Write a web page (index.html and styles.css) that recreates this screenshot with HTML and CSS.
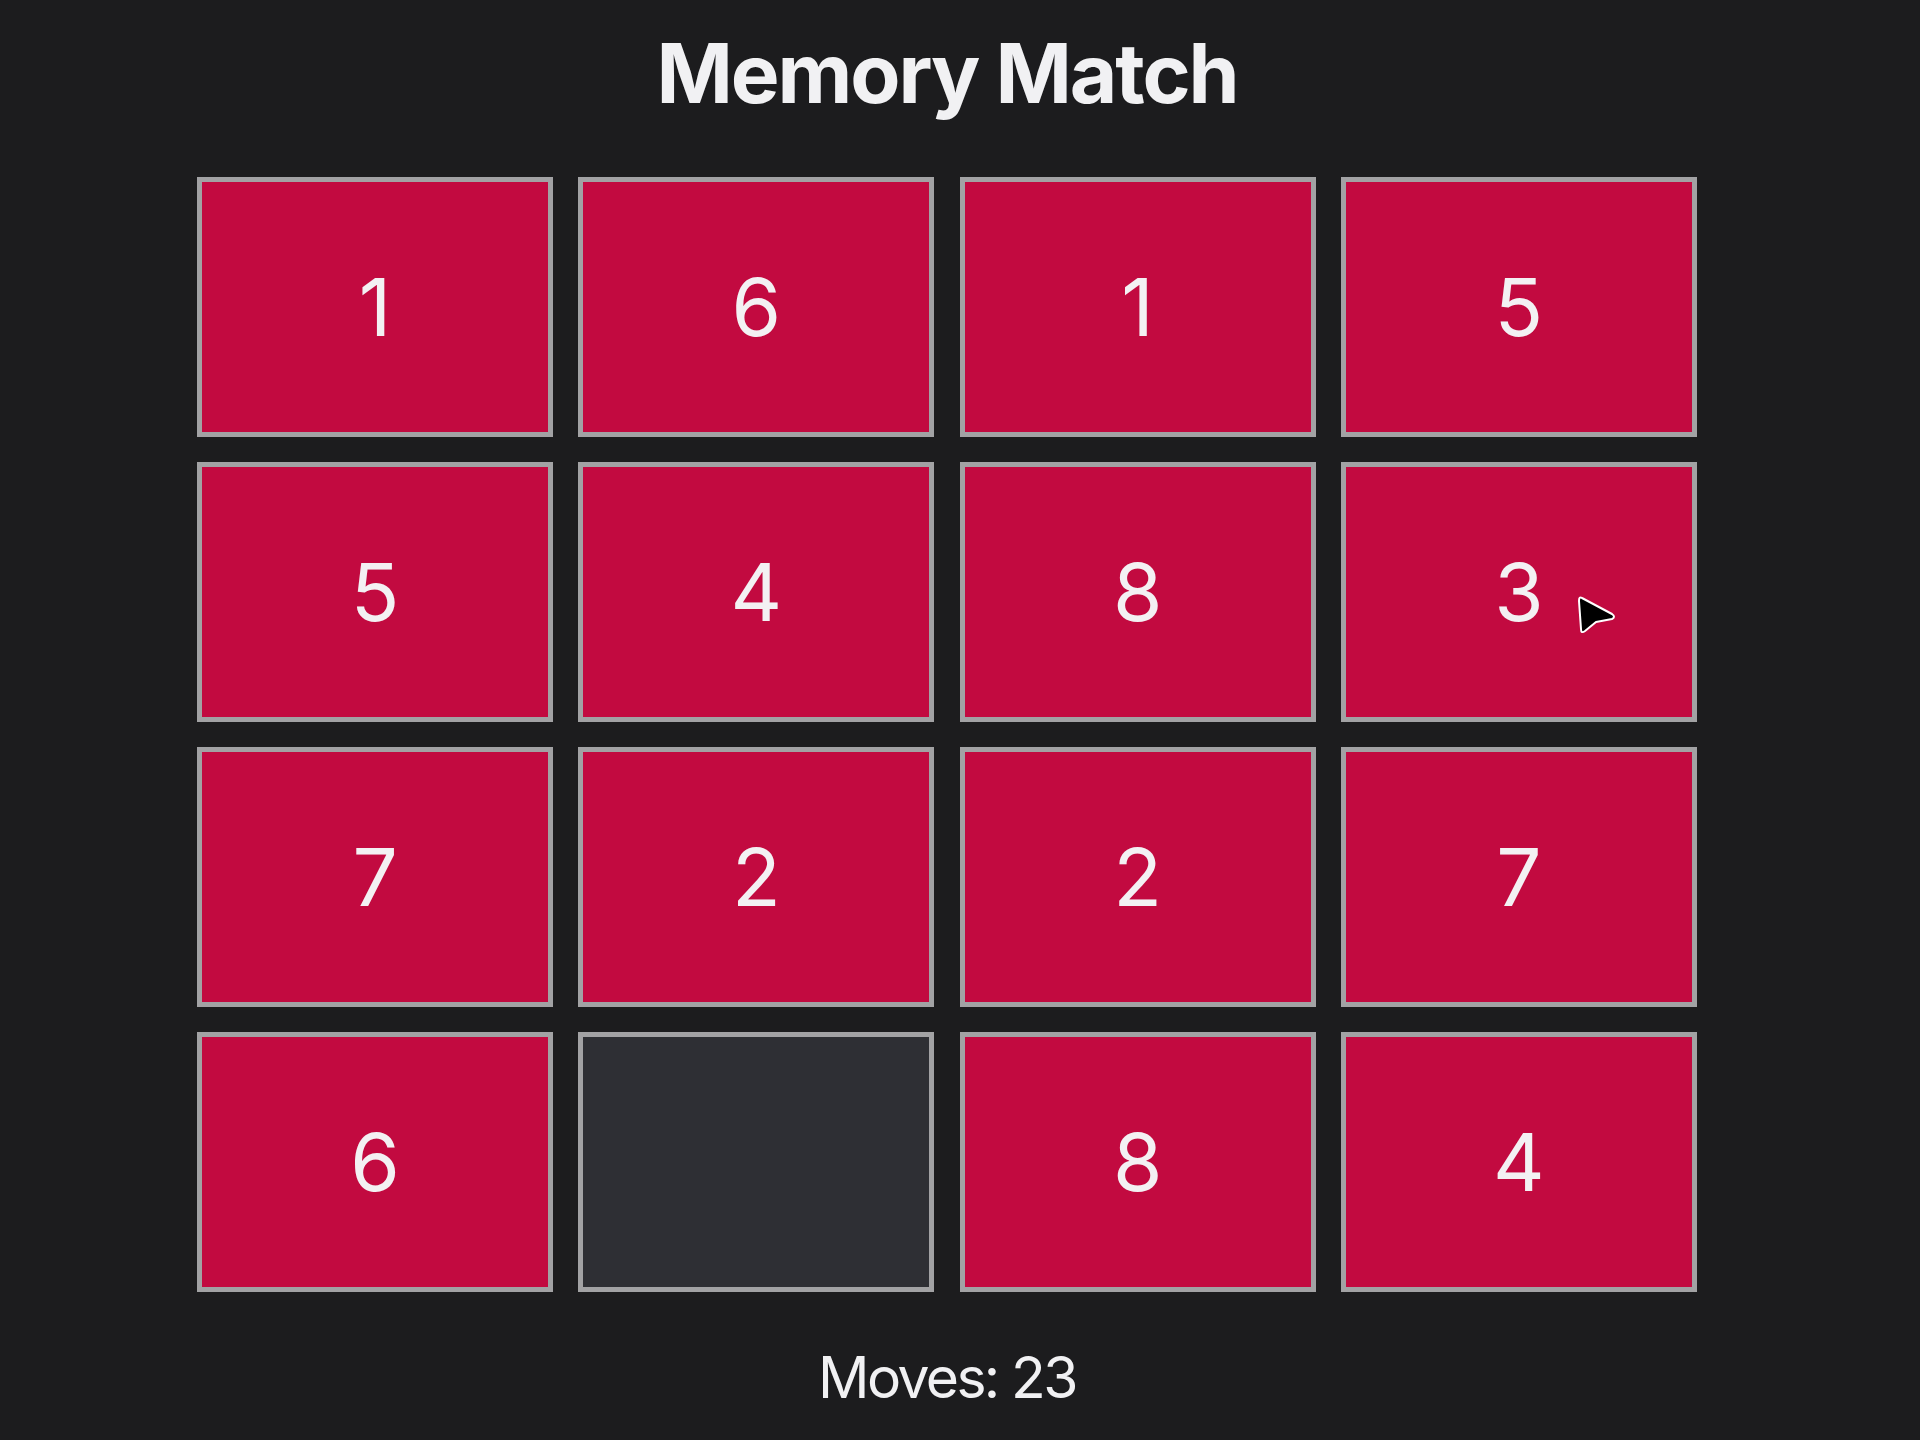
FILE: index.html
```html
<!DOCTYPE html>
<html lang="en">
<head>
<meta charset="utf-8">
<title>Memory Match</title>
<link rel="stylesheet" href="styles.css">
</head>
<body>
<div class="page">
  <h1 class="title">Memory Match</h1>
  <div class="board">
    <div class="card">1</div>
    <div class="card">6</div>
    <div class="card">1</div>
    <div class="card">5</div>
    <div class="card">5</div>
    <div class="card">4</div>
    <div class="card">8</div>
    <div class="card">3</div>
    <div class="card">7</div>
    <div class="card">2</div>
    <div class="card">2</div>
    <div class="card">7</div>
    <div class="card">6</div>
    <div class="card card-empty"></div>
    <div class="card">8</div>
    <div class="card">4</div>
  </div>
  <div class="moves">Moves: 23</div>
</div>
<svg class="cursor" width="55" height="60" viewBox="0 0 55 60" xmlns="http://www.w3.org/2000/svg">
  <path d="M12 13 L42 29 Q46 32 42 34 L26 37 L15 46 Q11 49 11 44 L9 16 Q9 11 12 13 Z" fill="#000" stroke="#fff" stroke-width="2" stroke-linejoin="round"/>
</svg>
</body>
</html>
```

FILE: styles.css
```css
html, body {
  margin: 0;
  padding: 0;
  background: #1c1c1e;
}
body {
  font-family: Inter, "Noto Sans", "Liberation Sans", sans-serif;
  color: #f1f1f3;
  min-height: 1440px;
}
.page {
  width: 1894px;
  display: flex;
  flex-direction: column;
  align-items: center;
}
.title {
  margin: 33px 0 0 0;
  font-size: 82px;
  line-height: 1;
  font-weight: 700;
  letter-spacing: -2.1px;
}
.board {
  margin-top: 62px;
  display: grid;
  grid-template-columns: repeat(4, 356px);
  grid-auto-rows: 260px;
  column-gap: 25.3px;
  row-gap: 25px;
}
.card {
  box-sizing: border-box;
  border: 5px solid #a2a2a4;
  background: #c20a40;
  display: flex;
  align-items: center;
  justify-content: center;
  font-size: 80px;
  line-height: 1;
  font-weight: 400;
  color: #f3f1f3;
}
.card-empty {
  background: #2e2f34;
}
.moves {
  margin-top: 57px;
  font-size: 57px;
  line-height: 1;
  font-weight: 400;
  letter-spacing: -2.6px;
}
.cursor {
  position: absolute;
  left: 1570px;
  top: 585px;
}
```
